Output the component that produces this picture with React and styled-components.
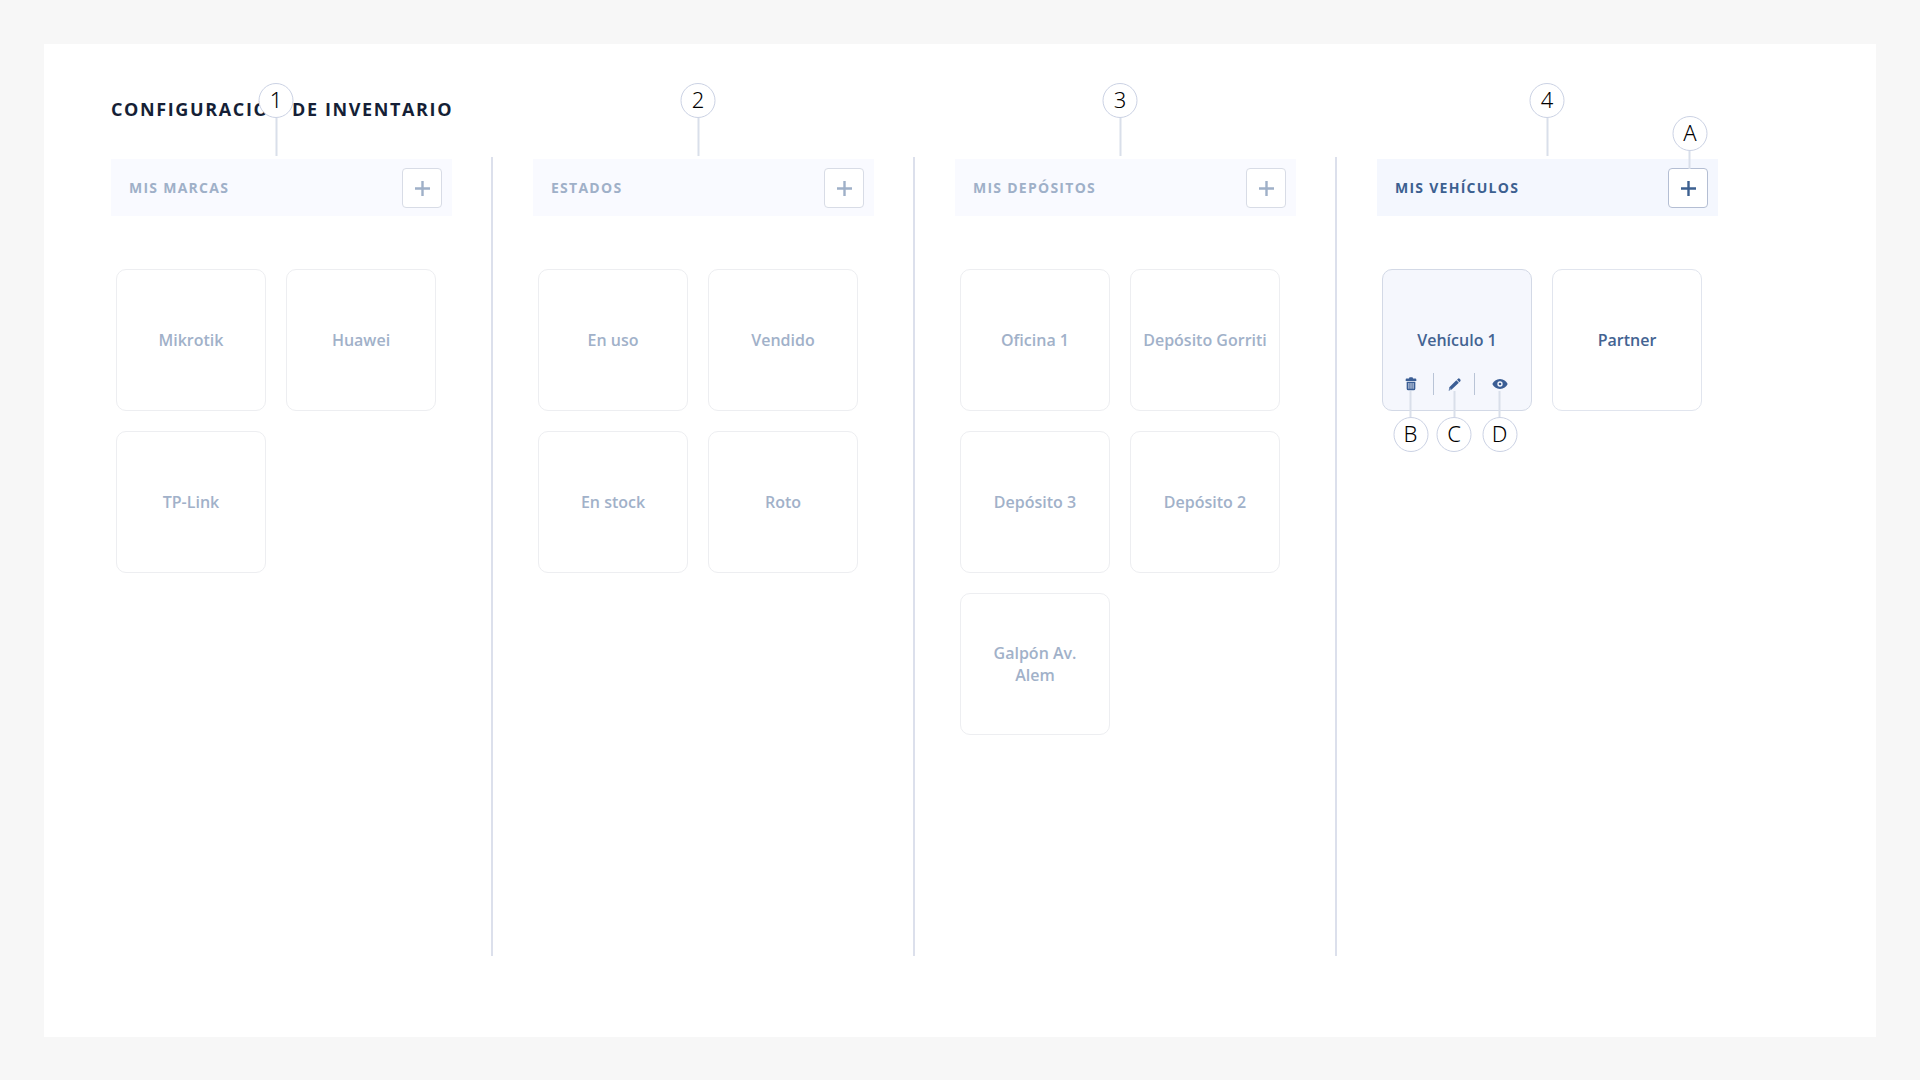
import React from 'react'
import styled, { createGlobalStyle } from 'styled-components'

const GlobalStyle = createGlobalStyle`
  * {
    box-sizing: border-box;
  }
  body {
    margin: 0;
    background-color: #f7f7f7;
    font-family: "Open Sans", "Noto Sans", sans-serif;
  }
`
const Page = styled.div`
  display: flex;
  min-height: 100vh;
  padding: 44px 44px 43px;
`
const Panel = styled.main`
  flex: 1;
  display: flex;
  flex-direction: column;
  padding: 53px 117px 81px 67px;
  background-color: #fff;
`
const Title = styled.h1`
  margin: 0 0 36px;
  font-size: 18px;
  line-height: 24px;
  font-weight: 700;
  letter-spacing: 0.09em;
  color: #151f36;
  white-space: nowrap;
`
const Columns = styled.div`
  flex: 1;
  display: grid;
  grid-template-columns: repeat(4, minmax(0, 1fr));
  gap: 40px;
`
const Column = styled.section`
  padding: 2px 39px 0 0;
  border-right: 2px solid #dce0ec;
  &:last-child {
    border-color: transparent;
  }
`
const ColumnHeader = styled.header`
  position: relative;
  display: flex;
  justify-content: space-between;
  align-items: center;
  height: 57px;
  padding: 0 10px 0 18px;
  background-color: ${({ $active }) => ($active ? '#f4f7fe' : '#f9faff')};
`
const ColumnTitle = styled.h2`
  margin: 0;
  font-size: 14px;
  line-height: 20px;
  font-weight: 700;
  letter-spacing: 0.09em;
  color: ${({ $active }) => ($active ? '#3c6090' : '#9fb0c8')};
`
const AddButton = styled.button`
  position: relative;
  display: flex;
  justify-content: center;
  align-items: center;
  width: 40px;
  height: 40px;
  padding: 0;
  border: 1px solid ${({ $active }) => ($active ? '#b4bed3' : '#d8dce6')};
  border-radius: 4px;
  background-color: #fff;
  color: ${({ $active }) => ($active ? '#3c6090' : '#9fb0c8')};
  cursor: pointer;
`
const Cards = styled.ul`
  display: grid;
  grid-template-columns: 1fr 1fr;
  gap: 20px;
  margin: 53px 16px 0 5px;
  padding: 0;
  list-style: none;
`
const Card = styled.li`
  display: grid;
  grid-template-rows: 1fr auto 1fr;
  height: 142px;
  border: 1px solid ${({ $active, $selected }) => ($selected ? '#d3d9e6' : $active ? '#e1e5ee' : '#edeef1')};
  border-radius: 10px;
  background-color: ${({ $selected }) => ($selected ? '#f5f7fd' : '#fff')};
  color: ${({ $active }) => ($active ? '#436392' : '#a1b1c9')};
`
const CardName = styled.span`
  grid-row: 2;
  padding: 0 12px;
  font-size: 16px;
  line-height: 22px;
  font-weight: 600;
  text-align: center;
`
const Actions = styled.div`
  grid-row: 3;
  align-self: end;
  display: flex;
  margin: 0 7px 15px 5px;
`
const Action = styled.button`
  position: relative;
  flex: ${({ $grow }) => $grow} 1 0;
  display: flex;
  justify-content: center;
  align-items: center;
  height: 22px;
  padding: 0;
  border: none;
  background: none;
  color: #3b5e95;
  cursor: pointer;
`
const Separator = styled.span`
  width: 1px;
  background-color: #b9c4d6;
`

// Numbered callouts: a circle with a stem that points at its target
const Callout = styled.span`
  position: absolute;
  display: flex;
  flex-direction: column;
  align-items: center;
  transform: translateX(-50%);
`
const ColumnCallout = styled(Callout)`
  left: ${({ $left }) => $left}px;
  bottom: calc(100% + 3px);
`
const AddCallout = styled(Callout)`
  left: 55%;
  bottom: 100%;
`
const ActionCallout = styled(Callout)`
  left: 50%;
  top: 18px;
  flex-direction: column-reverse;
`
const Circle = styled.span`
  display: flex;
  justify-content: center;
  align-items: center;
  width: 35px;
  height: 35px;
  padding-bottom: 3px;
  border: 1px solid #cbd2e4;
  border-radius: 50%;
  background-color: #fff;
  color: #000;
  font-family: "Noto Sans", "Open Sans", sans-serif;
  font-size: 22px;
  line-height: 30px;
  font-weight: 350;
`
const Stem = styled.span`
  width: 2px;
  height: ${({ $length }) => $length}px;
  background-color: #d9dfea;
`

const PlusIcon = () => (
  <svg width="16" height="16" viewBox="0 0 16 16" fill="none" stroke="currentColor" strokeWidth="2.4" aria-hidden="true">
    <path d="M8.5 1v15M1 8.5h15" />
  </svg>
)

const TrashIcon = () => (
  <svg width="12" height="14" viewBox="0 0 36 42" fill="currentColor" aria-hidden="true">
    <path d="M12 4.500Q12 1 15 1h6q3 0 3 3.500h7.500q2.500 0 2.500 3.500v4H2V8q0-3.500 2.500-3.500z" />
    <path fillRule="evenodd" d="M5 14h26v21q0 5-5 5H10q-5 0-5-5zM10.500 18v17h2.500V18zM16.700 18v17h2.600V18zM23 18v17h2.500V18z" />
  </svg>
)

const PencilIcon = () => (
  <svg width="13" height="13" viewBox="0 0 39 39" fill="currentColor" aria-hidden="true">
    <path d="M27 5l3-3q2.500-2 5 0l2 2.500q2 2.500 0 5l-3 3z" />
    <path fillRule="evenodd" d="M25 7l7.500 7.500L11 34.500 2 38l2-10zM5.500 31l-1 4.500 4.500-1.500z" />
  </svg>
)

const EyeIcon = () => (
  <svg width="16" height="12" viewBox="0 0 48 36" fill="currentColor" aria-hidden="true">
    <path fillRule="evenodd" d="M24 3C13 3 5 10 1 18c4 8 12 15 23 15s19-7 23-15C43 10 35 3 24 3zm0 7a8 8 0 1 1 0 16 8 8 0 0 1 0-16z" />
    <circle cx="24" cy="18" r="4" />
  </svg>
)

const actions = [
  { mark: 'B', label: 'Eliminar', Icon: TrashIcon, grow: 45 },
  { mark: 'C', label: 'Editar', Icon: PencilIcon, grow: 40 },
  { mark: 'D', label: 'Ver', Icon: EyeIcon, grow: 49 },
]

const columns = [
  { mark: '1', markLeft: 165, title: 'MIS MARCAS', items: ['Mikrotik', 'Huawei', 'TP-Link'] },
  { mark: '2', markLeft: 165, title: 'ESTADOS', items: ['En uso', 'Vendido', 'En stock', 'Roto'] },
  {
    mark: '3',
    markLeft: 165,
    title: 'MIS DEPÓSITOS',
    items: ['Oficina 1', 'Depósito Gorriti', 'Depósito 3', 'Depósito 2', 'Galpón Av. Alem'],
  },
  { mark: '4', markLeft: 170, title: 'MIS VEHÍCULOS', items: ['Vehículo 1', 'Partner'], active: true, selected: 'Vehículo 1' },
]

const CardActions = () => (
  <Actions>
    {actions.map(({ mark, label, Icon, grow }, i) => (
      <React.Fragment key={mark}>
        {i > 0 && <Separator />}
        <Action $grow={grow} aria-label={label}>
          <Icon />
          <ActionCallout>
            <Circle>{mark}</Circle>
            <Stem $length={26} />
          </ActionCallout>
        </Action>
      </React.Fragment>
    ))}
  </Actions>
)

const InventoryColumn = ({ mark, markLeft, title, items, active, selected }) => (
  <Column>
    <ColumnHeader $active={active}>
      <ColumnCallout $left={markLeft}>
        <Circle>{mark}</Circle>
        <Stem $length={38} />
      </ColumnCallout>
      <ColumnTitle $active={active}>{title}</ColumnTitle>
      <AddButton $active={active} aria-label={`Agregar a ${title}`}>
        <PlusIcon />
        {active && (
          <AddCallout>
            <Circle>A</Circle>
            <Stem $length={18} />
          </AddCallout>
        )}
      </AddButton>
    </ColumnHeader>
    <Cards>
      {items.map((item) => (
        <Card key={item} $active={active} $selected={item === selected}>
          <CardName>{item}</CardName>
          {item === selected && <CardActions />}
        </Card>
      ))}
    </Cards>
  </Column>
)

const App = () => {
  return (
    <>
      <GlobalStyle />
      <Page>
        <Panel>
          <Title>CONFIGURACIÓN DE INVENTARIO</Title>
          <Columns>
            {columns.map((column) => (
              <InventoryColumn key={column.mark} {...column} />
            ))}
          </Columns>
        </Panel>
      </Page>
    </>
  )
}

export default App
